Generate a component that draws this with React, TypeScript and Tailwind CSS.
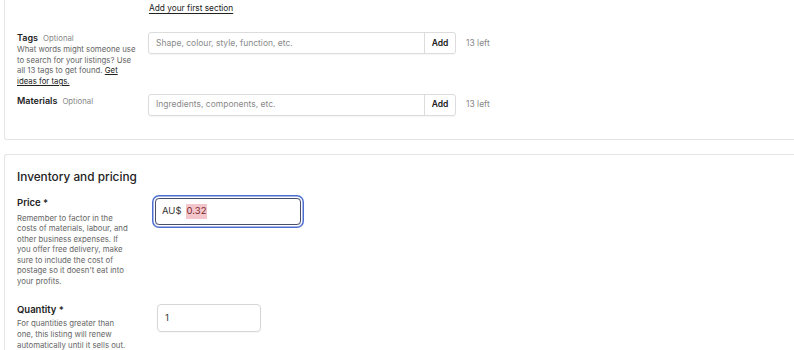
import React from "react";

const font = { fontFamily: "Inter, 'Liberation Sans', sans-serif" };

function TagInput({ placeholder }: { placeholder: string }) {
  return (
    <div className="flex items-center">
      <div className="flex h-[22px] w-[308px] rounded-[3px] border border-[#dcdcdc] shadow-[0_1px_1px_rgba(0,0,0,0.04)]">
        <div className="flex flex-1 items-center pl-[7px] text-[8.5px] text-[#8a8a8a]">{placeholder}</div>
        <div className="flex w-[31px] items-center justify-center border-l border-[#dcdcdc] text-[8.5px] font-semibold text-[#222]">
          Add
        </div>
      </div>
      <div className="ml-[10px] text-[8.5px] text-[#8a8a8a]">13 left</div>
    </div>
  );
}

function Lines({ lines, lh }: { lines: React.ReactNode[]; lh: string }) {
  return (
    <div className={`text-[7.8px] text-[#666] whitespace-nowrap ${lh}`}>
      {lines.map((l, i) => (
        <div key={i}>{l}</div>
      ))}
    </div>
  );
}

export default function App() {
  return (
    <div className="h-[350px] w-[794px] overflow-hidden bg-white text-[#222]" style={font}>
      {/* Card 1 */}
      <div className="ml-[4px] h-[140px] rounded-bl-[3px] border-b border-l border-[#e4e4e4] pl-[12px]">
        <div className="pl-[132px] pt-[1px] text-[8.3px] leading-[14px] underline underline-offset-[1.5px]">
          Add your first section
        </div>
        <div className="mt-[17px] flex items-start">
          <div className="w-[131px]">
            <div className="text-[9px] leading-[11px]">
              <span className="font-semibold">Tags</span>
              <span className="ml-[5px] text-[7.8px] text-[#888]">Optional</span>
            </div>
            <Lines
              lh="leading-[10.7px]"
              lines={[
                "What words might someone use",
                "to search for your listings? Use",
                <>
                  all 13 tags to get found. <span className="text-[#222] underline">Get</span>
                </>,
                <span className="text-[#222] underline">ideas for tags.</span>,
              ]}
            />
          </div>
          <TagInput placeholder="Shape, colour, style, function, etc." />
        </div>
        <div className="mt-[7px] flex items-start">
          <div className="w-[131px] pt-[1.5px]">
            <div className="text-[9px] leading-[11px]">
              <span className="font-semibold">Materials</span>
              <span className="ml-[5px] text-[7.8px] text-[#888]">Optional</span>
            </div>
          </div>
          <TagInput placeholder="Ingredients, components, etc." />
        </div>
      </div>

      {/* Card 2 */}
      <div className="ml-[4px] mt-[14px] h-[200px] rounded-tl-[3px] border-l border-t border-[#e4e4e4] pl-[12px]">
        <div className="pt-[13px] text-[11.8px] font-medium leading-[18px] text-[#222]">Inventory and pricing</div>
        <div className="mt-[10px] flex items-start">
          <div className="w-[138px]">
            <div className="text-[9.5px] font-semibold leading-[14px]">Price *</div>
            <div className="mt-[2.5px]">
              <Lines
                lh="leading-[10.6px]"
                lines={[
                  "Remember to factor in the",
                  "costs of materials, labour, and",
                  "other business expenses. If",
                  "you offer free delivery, make",
                  "sure to include the cost of",
                  "postage so it doesn't eat into",
                  "your profits.",
                ]}
              />
            </div>
          </div>
          <div className="mt-[2px] flex h-[27px] w-[146px] items-center rounded-[4px] border border-[#4a4f66] pl-[6px] shadow-[0_0_0_1.5px_#ffffff,0_0_0_3px_#4d6fcf]">
            <span className="text-[9.5px] text-[#333]">AU$</span>
            <span className="ml-[4px] bg-[#f3c6cb] px-[1px] text-[9.5px] text-[#7a2a30]">0.32</span>
          </div>
        </div>
        <div className="mt-[16px] flex items-start">
          <div className="w-[140px]">
            <div className="text-[9.5px] font-semibold leading-[14px]">Quantity *</div>
            <div className="mt-[1.7px]">
              <Lines
                lh="leading-[10.7px]"
                lines={[
                  "For quantities greater than",
                  "one, this listing will renew",
                  "automatically until it sells out.",
                ]}
              />
            </div>
          </div>
          <div className="mt-[1px] flex h-[28px] w-[104px] items-center rounded-[4px] border border-[#d6d6d6] pl-[7px] text-[9.5px] text-[#333] shadow-[0_1px_1px_rgba(0,0,0,0.04)]">
            1
          </div>
        </div>
      </div>
    </div>
  );
}
